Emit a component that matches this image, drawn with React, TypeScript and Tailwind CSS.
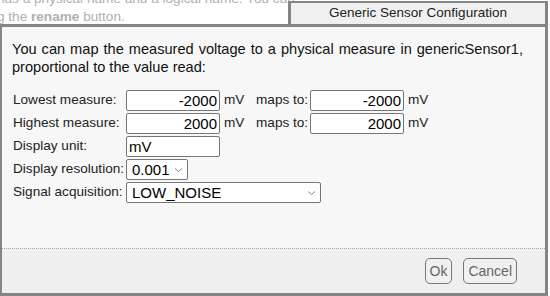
import React from "react";

const font = { fontFamily: '"Liberation Sans", Arial, sans-serif' };

function NumInput({ value, align = "right", w = "w-[94px]" }: { value: string; align?: "right" | "left"; w?: string }) {
  return (
    <div
      className={`${w} h-[21px] bg-white border border-[#767676] rounded-[2px] flex items-center px-[2px] text-[15px] text-black leading-none ${
        align === "right" ? "justify-end" : "justify-start"
      }`}
    >
      {value}
    </div>
  );
}

function Select({ value, w }: { value: string; w: string }) {
  return (
    <div
      className={`${w} h-[21px] bg-white border border-[#767676] rounded-[2px] flex items-center justify-between pl-[5px] pr-[4px] text-[15px] text-black leading-none`}
    >
      <span>{value}</span>
      <svg width="9" height="6" viewBox="0 0 9 6" className="ml-1">
        <path d="M1 1.5 L4.5 4.5 L8 1.5" fill="none" stroke="#888" strokeWidth="1" />
      </svg>
    </div>
  );
}

function Row({ label, children }: { label: string; children: React.ReactNode }) {
  return (
    <div className="flex items-center h-[23px]">
      <div className="w-[113px] text-[13.6px] text-[#222]">{label}</div>
      {children}
    </div>
  );
}

export default function App() {
  return (
    <div className="relative w-[550px] h-[296px] bg-white overflow-hidden" style={font}>
      <div className="-mt-[10px] -ml-[3px] text-[13.6px] leading-[18px] text-[#b0b0b0] whitespace-nowrap">
        <div>has a physical name and a logical name. You can</div>
        <div>
          g the <b>rename</b> button.
        </div>
      </div>

      <div className="absolute top-[1px] left-[-1px] w-[549px] flex flex-col">
        <div className="self-end w-[260px] h-[23px] bg-[#f0f0f0] border-t-2 border-l-[3px] border-r-[3px] border-[#858585] flex items-center justify-center text-[13.5px] text-[#222]">
          Generic Sensor Configuration
        </div>
        <div className="h-[272px] border-[3px] border-[#858585] flex flex-col">
          <div className="flex-1 bg-[#f7f7f7] pl-[10px] pr-[22px] pt-[13px]">
            <p className="text-[14.6px] leading-[18px] text-justify text-[#111]">
              You can map the measured voltage to a physical measure in genericSensor1, proportional to the value read:
            </p>
            <div className="mt-[13px] flex flex-col pl-[1px]">
              <Row label="Lowest measure:">
                <NumInput value="-2000" />
                <span className="ml-[4px] w-[32px] text-[13.6px] text-[#222]">mV</span>
                <span className="w-[54px] text-[13.6px] text-[#222]">maps to:</span>
                <NumInput value="-2000" />
                <span className="ml-[4px] text-[13.6px] text-[#222]">mV</span>
              </Row>
              <Row label="Highest measure:">
                <NumInput value="2000" />
                <span className="ml-[4px] w-[32px] text-[13.6px] text-[#222]">mV</span>
                <span className="w-[54px] text-[13.6px] text-[#222]">maps to:</span>
                <NumInput value="2000" />
                <span className="ml-[4px] text-[13.6px] text-[#222]">mV</span>
              </Row>
              <Row label="Display unit:">
                <NumInput value="mV" align="left" />
              </Row>
              <Row label="Display resolution:">
                <Select value="0.001" w="w-[62px]" />
              </Row>
              <Row label="Signal acquisition:">
                <Select value="LOW_NOISE" w="w-[195px]" />
              </Row>
            </div>
          </div>
          <div className="h-[45px] bg-[#efefef] border-t border-dotted border-[#a8a8a8] flex items-center justify-end pr-[28px] gap-[11px]">
            <button className="h-[26px] px-[4px] rounded-[5px] border border-[#777] bg-[#f0f0f0] text-[14px] text-[#666]">
              Ok
            </button>
            <button className="h-[26px] px-[4px] rounded-[5px] border border-[#777] bg-[#f0f0f0] text-[14px] text-[#666]">
              Cancel
            </button>
          </div>
        </div>
      </div>
    </div>
  );
}
